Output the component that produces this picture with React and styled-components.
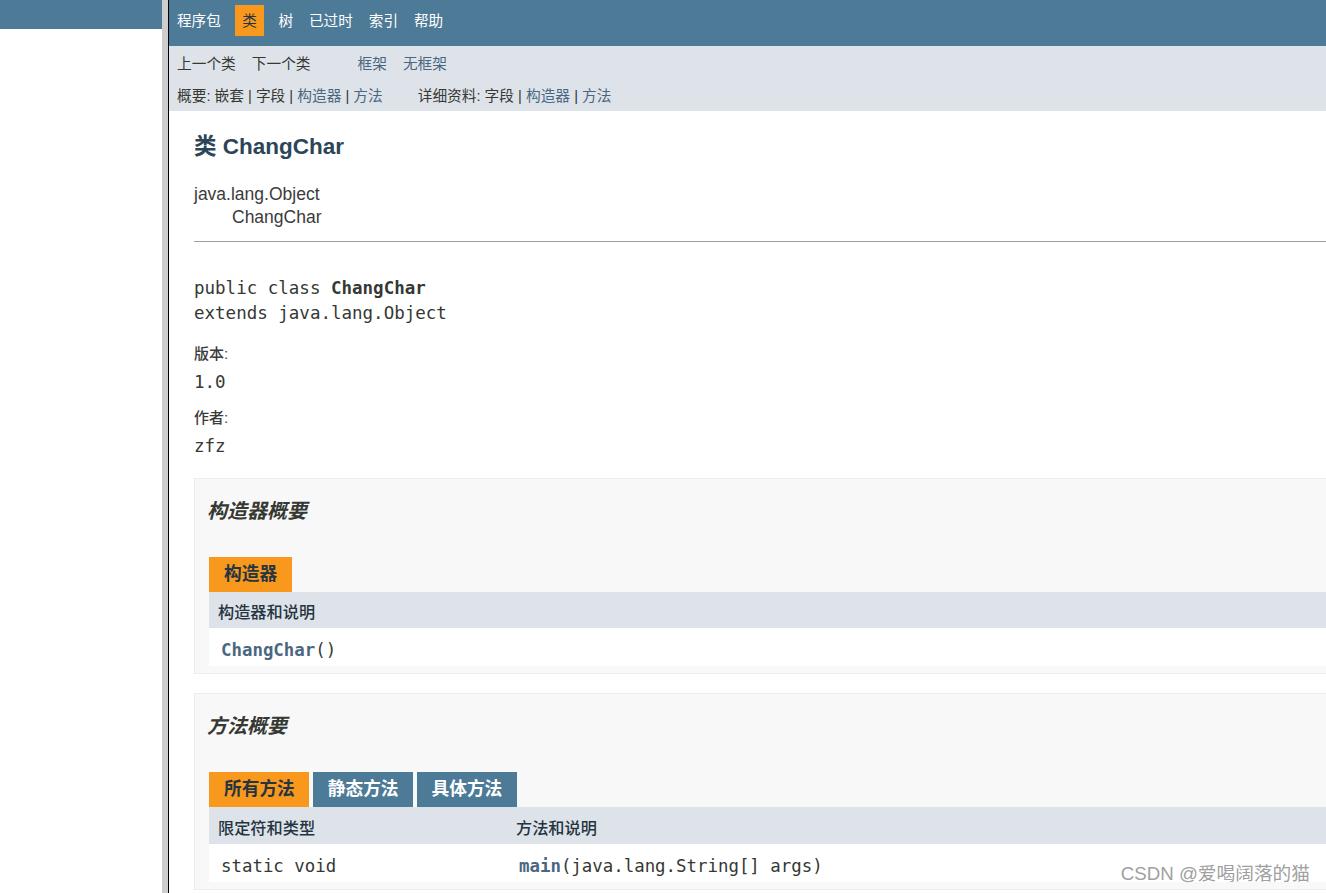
import React from "react";
import styled, { createGlobalStyle, css } from "styled-components";

const GlobalStyle = createGlobalStyle`
  html, body {
    margin: 0;
    padding: 0;
  }
  body {
    font-family: "Liberation Sans", "Noto Sans CJK SC", sans-serif;
    color: #353833;
    background: #ffffff;
  }
  #root {
    height: 100vh;
  }
`;

const mono = `"DejaVu Sans Mono", "Noto Sans CJK SC", monospace`;

const Page = styled.div`
  position: relative;
  display: flex;
  height: 100vh;
  overflow: hidden;
`;

// left frame (package list, empty here)
const LeftFrame = styled.div`
  width: 162px;
  flex-shrink: 0;
  background: #ffffff;
`;

const LeftStrip = styled.div`
  height: 29px;
  background: #4d7a97;
`;

const Splitter = styled.div`
  width: 6px;
  flex-shrink: 0;
  background: #cdcdcd;
  border-right: 1px solid #000000;
`;

const RightFrame = styled.div`
  flex: 1;
  min-width: 0;
  overflow: hidden;
`;

const TopNav = styled.ul`
  display: flex;
  align-items: flex-start;
  height: 46px;
  box-sizing: border-box;
  margin: 0;
  padding: 5px 0 0;
  list-style: none;
  background: #4d7a97;
  font-size: 14.6px;
`;

const NavItem = styled.li`
  padding: 1px 8px 0;
  line-height: 30px;
  color: #ffffff;
  ${(p) =>
    p.$active &&
    css`
      margin: 0 6px;
      padding: 1px 7.5px 0;
      background: #f8981d;
      color: #253441;
    `}
`;

const SubNav = styled.div`
  background: #dee3e9;
  font-size: 14.7px;
`;

const SubRow = styled.div`
  display: flex;
  align-items: center;
  height: ${(p) => p.$h}px;
  box-sizing: border-box;
  padding-bottom: ${(p) => p.$lift || 0}px;
  white-space: pre;
`;

const SubList = styled.ul`
  display: flex;
  margin: 0 31px 0 0;
  padding: 0;
  list-style: none;
`;

const SubItem = styled.li`
  padding: 0 8px;
  color: ${(p) => (p.$link ? "#4a6782" : "#353833")};
`;

const SummaryGroup = styled.div`
  padding-left: 8px;
  margin-right: 27px;
`;

const Link = styled.a`
  color: #4a6782;
  text-decoration: none;
  font-weight: ${(p) => (p.$bold ? "bold" : "normal")};
`;

const Content = styled.div`
  width: 1225px;
  box-sizing: border-box;
  padding: 22px 25px 0;
`;

const Title = styled.h2`
  margin: 0;
  font-size: 22.5px;
  line-height: 28px;
  font-weight: bold;
  color: #2c4557;
`;

const Inheritance = styled.div`
  margin-top: 22px;
  font-size: 17.5px;
  line-height: 23px;
  color: #3b3b3b;
`;

const InheritChild = styled.div`
  padding-left: 38px;
`;

const Rule = styled.hr`
  margin: 11.5px 0 0;
  border: 0;
  border-top: 1px solid #a0a0a0;
`;

const Signature = styled.pre`
  margin: 34px 0 0;
  font-family: ${mono};
  font-size: 17.5px;
  line-height: 25px;
  color: #353833;
`;

const Info = styled.dl`
  margin: 0;
`;

const Label = styled.dt`
  margin-top: ${(p) => (p.$first ? 19 : 14.5)}px;
  font-size: 15px;
  line-height: 18px;
  font-weight: 500;
  color: #3a3a3a;
`;

const Value = styled.dd`
  margin: 7px 0 0;
  font-family: ${mono};
  font-size: 17.5px;
  line-height: 25px;
`;

const Block = styled.section`
  margin-top: ${(p) => p.$top}px;
  border: 1px solid #ededed;
  background: #f8f8f8;
  padding: 18px 0 7px 14px;
`;

const BlockHeading = styled.h3`
  margin: 0 0 0 -2px;
  font-size: 20px;
  line-height: 28px;
  font-style: italic;
  font-weight: bold;
  color: #353833;
`;

const TabBar = styled.div`
  display: flex;
  margin-top: 32px;
`;

const Tab = styled.span`
  height: 35px;
  line-height: 35px;
  padding: 0 14.5px 0 15px;
  margin-right: 3.5px;
  font-size: 17.7px;
  font-weight: bold;
  background: ${(p) => (p.$active ? "#f8981d" : "#4d7a97")};
  color: ${(p) => (p.$active ? "#253441" : "#ffffff")};
`;

const Table = styled.table`
  width: 100%;
  border-collapse: collapse;
  background: #ffffff;
`;

const HeadCell = styled.th`
  box-sizing: border-box;
  height: ${(p) => p.$h}px;
  width: ${(p) => (p.$w ? `${p.$w}px` : "auto")};
  padding: 2px 0 0 9px;
  background: #dee3e9;
  text-align: left;
  font-size: 16.2px;
  font-weight: 500;
  color: #253441;
`;

const Cell = styled.td`
  box-sizing: border-box;
  height: 38px;
  padding: 5px 0 0 12px;
  font-family: ${mono};
  font-size: 17.4px;
  color: #353833;
`;

const Watermark = styled.div`
  position: absolute;
  right: 16px;
  bottom: 8px;
  font-size: 18.7px;
  line-height: 22px;
  color: #a0a0a0;
  text-shadow: 0 0 1px #ffffff, 0 0 2px #ffffff;
`;

const navItems = ["程序包", "类", "树", "已过时", "索引", "帮助"];

export default function App() {
  return (
    <>
      <GlobalStyle />
      <Page>
        <LeftFrame>
          <LeftStrip />
        </LeftFrame>
        <Splitter />
        <RightFrame>
          <TopNav>
            {navItems.map((n) => (
              <NavItem key={n} $active={n === "类"}>
                {n}
              </NavItem>
            ))}
          </TopNav>
          <SubNav>
            <SubRow $h={33}>
              <SubList>
                <SubItem>上一个类</SubItem>
                <SubItem>下一个类</SubItem>
              </SubList>
              <SubList>
                <SubItem $link>框架</SubItem>
                <SubItem $link>无框架</SubItem>
              </SubList>
            </SubRow>
            <SubRow $h={32} $lift={2}>
              <SummaryGroup>
                概要: 嵌套 | 字段 | <Link>构造器</Link> | <Link>方法</Link>
              </SummaryGroup>
              <SummaryGroup>
                详细资料: 字段 | <Link>构造器</Link> | <Link>方法</Link>
              </SummaryGroup>
            </SubRow>
          </SubNav>

          <Content>
            <Title>类 ChangChar</Title>
            <Inheritance>
              <div>java.lang.Object</div>
              <InheritChild>ChangChar</InheritChild>
            </Inheritance>
            <Rule />
            <Signature>
              public class <b>ChangChar</b>
              {"\n"}extends java.lang.Object
            </Signature>
            <Info>
              <Label $first>版本:</Label>
              <Value>1.0</Value>
              <Label>作者:</Label>
              <Value>zfz</Value>
            </Info>

            <Block $top={19}>
              <BlockHeading>构造器概要</BlockHeading>
              <TabBar>
                <Tab $active>构造器</Tab>
              </TabBar>
              <Table>
                <tbody>
                  <tr>
                    <HeadCell $h={36}>构造器和说明</HeadCell>
                  </tr>
                  <tr>
                    <Cell>
                      <Link $bold>ChangChar</Link>()
                    </Cell>
                  </tr>
                </tbody>
              </Table>
            </Block>

            <Block $top={19}>
              <BlockHeading>方法概要</BlockHeading>
              <TabBar>
                <Tab $active>所有方法</Tab>
                <Tab>静态方法</Tab>
                <Tab>具体方法</Tab>
              </TabBar>
              <Table>
                <tbody>
                  <tr>
                    <HeadCell $h={37} $w={298}>
                      限定符和类型
                    </HeadCell>
                    <HeadCell $h={37}>方法和说明</HeadCell>
                  </tr>
                  <tr>
                    <Cell>static void</Cell>
                    <Cell>
                      <Link $bold>main</Link>(java.lang.String[] args)
                    </Cell>
                  </tr>
                </tbody>
              </Table>
            </Block>
          </Content>
        </RightFrame>
        <Watermark>CSDN @爱喝阔落的猫</Watermark>
      </Page>
    </>
  );
}
